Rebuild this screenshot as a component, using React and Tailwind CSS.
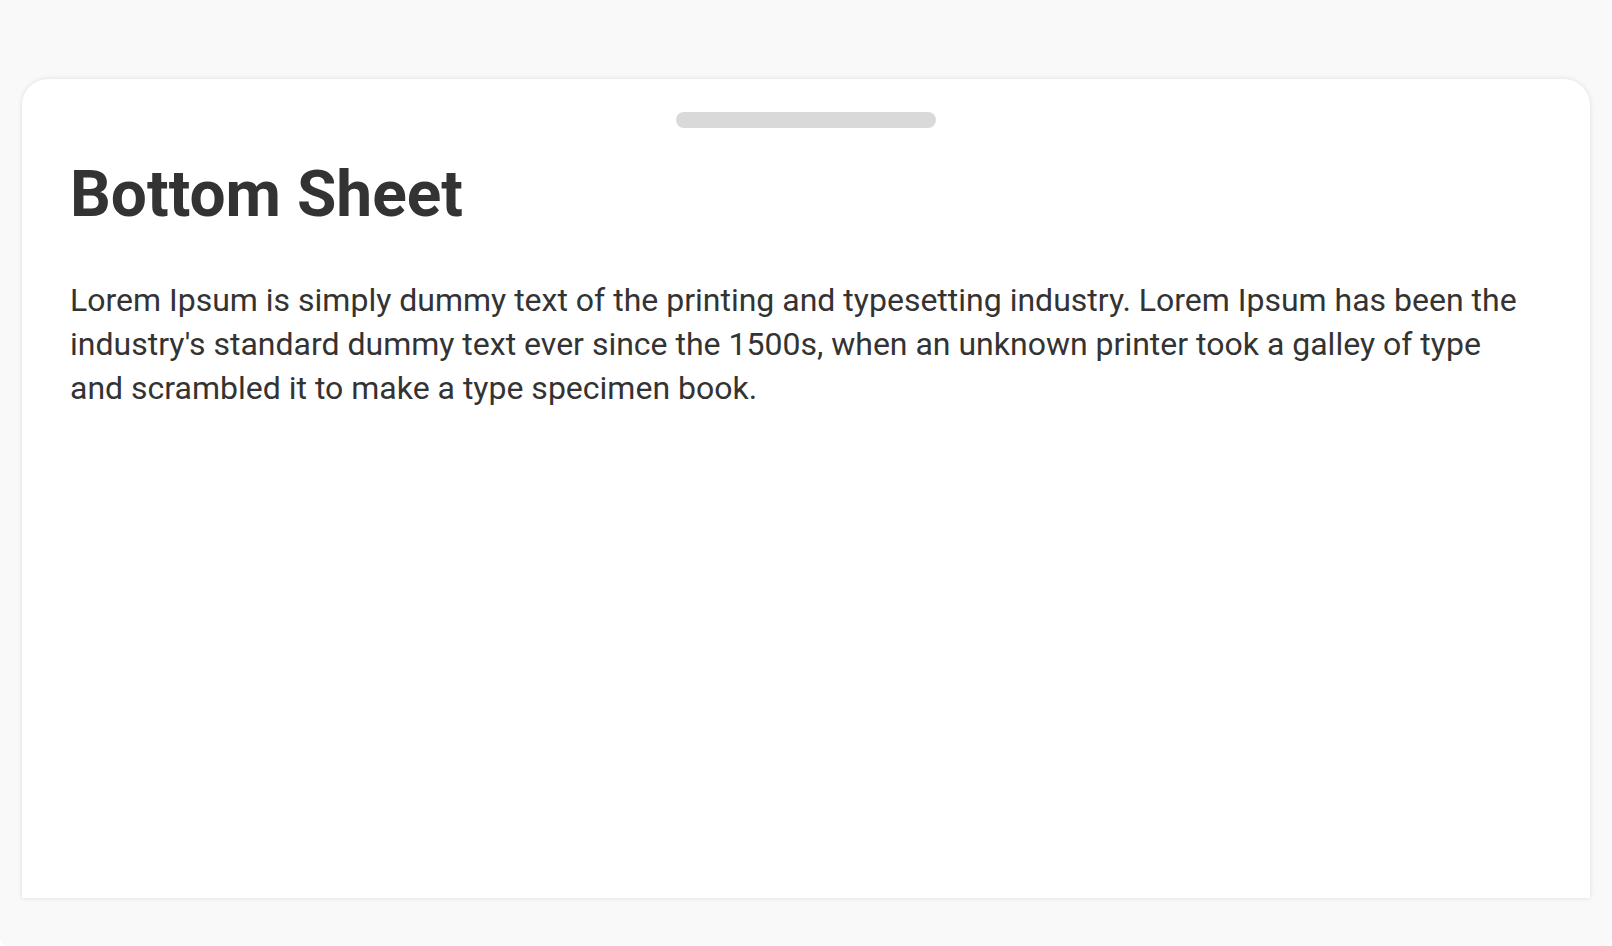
import React from 'react';

export default function App() {
  return (
    <div className="min-h-screen bg-white">
      <div
        className="h-[946px] bg-[#f9f9f9] rounded-b-lg pt-[79px] px-[22px]"
        style={{ fontFamily: 'Roboto, "Noto Sans", sans-serif' }}
      >
        {/* Sheet */}
        <div className="h-[819px] bg-white rounded-t-[26px] shadow-[0_0_5px_rgba(0,0,0,0.12)] pt-[33px] pl-[48px] pr-[48px]">
          <div className="mx-auto w-[260px] h-[16px] rounded-full bg-[#d9d9d9]" />
          <h1 className="mt-[29px] text-[64px] leading-[76px] font-bold text-[#333333]">Bottom Sheet</h1>
          <p className="mt-[45px] pr-[16px] text-[32px] leading-[44px] text-[#333333]">
            Lorem Ipsum is simply dummy text of the printing and typesetting industry. Lorem Ipsum has been the
            industry's standard dummy text ever since the 1500s, when an unknown printer took a galley of type
            and scrambled it to make a type specimen book.
          </p>
        </div>
      </div>
    </div>
  );
}
